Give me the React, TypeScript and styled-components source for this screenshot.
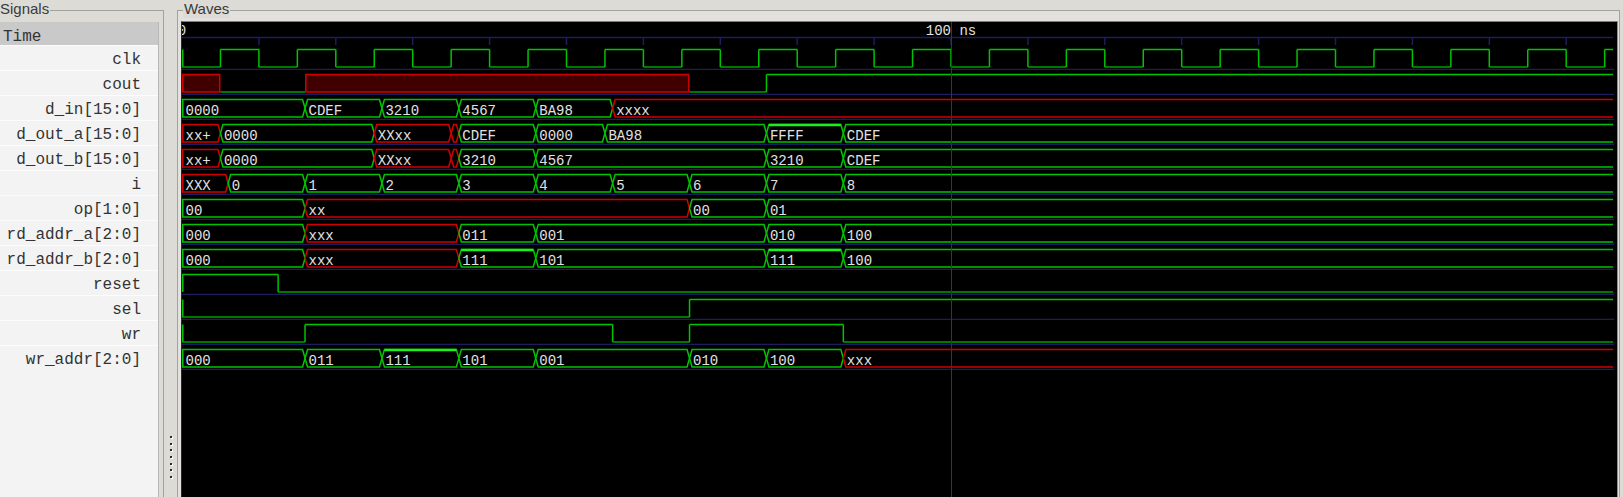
import React from "react";
import styled, { createGlobalStyle } from "styled-components";

// 7.69 px per ns, t=0 sits at the left edge of the wave canvas
const NS = 7.69;
const END = 186.1;
const px = (t: number) => t * NS;

const TOP = 4.5;
const BOT = 22;
const MID = 13.25;
const SLANT = 2.5;

const GREEN = "#00c400";
const GREEN_LOW = "#00a000";
const RED = "#d00000";
const XFILL = "#400000";
const NAVY = "#1c1c5e";
const MARKER = "#2c2c8c";
const TEXT = "#e2e2e2";
const ONES = "#1cf01c";
const CANVAS_W = 1435;

type BitSeg = { from: number; to: number; v: 0 | 1 | "x" };
type VecSeg = { from: number; to: number; label: string; x?: boolean; ones?: boolean };
type Signal =
  | { name: string; kind: "bit"; segs: BitSeg[] }
  | { name: string; kind: "vec"; segs: VecSeg[] };

const clock: BitSeg[] = [{ from: 0, to: 5, v: 0 }];
for (let t = 5; t < END; t += 10) {
  clock.push({ from: t, to: Math.min(t + 5, END), v: 1 });
  if (t + 5 < END) clock.push({ from: t + 5, to: Math.min(t + 10, END), v: 0 });
}

const signals: Signal[] = [
  { name: "clk", kind: "bit", segs: clock },
  {
    name: "cout",
    kind: "bit",
    segs: [
      { from: 0, to: 5, v: "x" },
      { from: 5, to: 16, v: 0 },
      { from: 16, to: 66, v: "x" },
      { from: 66, to: 76, v: 0 },
      { from: 76, to: END, v: 1 },
    ],
  },
  {
    name: "d_in[15:0]",
    kind: "vec",
    segs: [
      { from: 0, to: 16, label: "0000" },
      { from: 16, to: 26, label: "CDEF" },
      { from: 26, to: 36, label: "3210" },
      { from: 36, to: 46, label: "4567" },
      { from: 46, to: 56, label: "BA98" },
      { from: 56, to: END, label: "xxxx", x: true },
    ],
  },
  {
    name: "d_out_a[15:0]",
    kind: "vec",
    segs: [
      { from: 0, to: 5, label: "xx+", x: true },
      { from: 5, to: 25, label: "0000" },
      { from: 25, to: 35, label: "XXxx", x: true },
      { from: 35, to: 36, label: "", x: true },
      { from: 36, to: 46, label: "CDEF" },
      { from: 46, to: 55, label: "0000" },
      { from: 55, to: 76, label: "BA98" },
      { from: 76, to: 86, label: "FFFF", ones: true },
      { from: 86, to: END, label: "CDEF" },
    ],
  },
  {
    name: "d_out_b[15:0]",
    kind: "vec",
    segs: [
      { from: 0, to: 5, label: "xx+", x: true },
      { from: 5, to: 25, label: "0000" },
      { from: 25, to: 35, label: "XXxx", x: true },
      { from: 35, to: 36, label: "", x: true },
      { from: 36, to: 46, label: "3210" },
      { from: 46, to: 76, label: "4567" },
      { from: 76, to: 86, label: "3210" },
      { from: 86, to: END, label: "CDEF" },
    ],
  },
  {
    name: "i",
    kind: "vec",
    segs: [
      { from: 0, to: 6, label: "XXX", x: true },
      { from: 6, to: 16, label: "0" },
      { from: 16, to: 26, label: "1" },
      { from: 26, to: 36, label: "2" },
      { from: 36, to: 46, label: "3" },
      { from: 46, to: 56, label: "4" },
      { from: 56, to: 66, label: "5" },
      { from: 66, to: 76, label: "6" },
      { from: 76, to: 86, label: "7" },
      { from: 86, to: END, label: "8" },
    ],
  },
  {
    name: "op[1:0]",
    kind: "vec",
    segs: [
      { from: 0, to: 16, label: "00" },
      { from: 16, to: 66, label: "xx", x: true },
      { from: 66, to: 76, label: "00" },
      { from: 76, to: END, label: "01" },
    ],
  },
  {
    name: "rd_addr_a[2:0]",
    kind: "vec",
    segs: [
      { from: 0, to: 16, label: "000" },
      { from: 16, to: 36, label: "xxx", x: true },
      { from: 36, to: 46, label: "011" },
      { from: 46, to: 76, label: "001" },
      { from: 76, to: 86, label: "010" },
      { from: 86, to: END, label: "100" },
    ],
  },
  {
    name: "rd_addr_b[2:0]",
    kind: "vec",
    segs: [
      { from: 0, to: 16, label: "000" },
      { from: 16, to: 36, label: "xxx", x: true },
      { from: 36, to: 46, label: "111", ones: true },
      { from: 46, to: 76, label: "101" },
      { from: 76, to: 86, label: "111", ones: true },
      { from: 86, to: END, label: "100" },
    ],
  },
  {
    name: "reset",
    kind: "bit",
    segs: [
      { from: 0, to: 12.5, v: 1 },
      { from: 12.5, to: END, v: 0 },
    ],
  },
  {
    name: "sel",
    kind: "bit",
    segs: [
      { from: 0, to: 66, v: 0 },
      { from: 66, to: END, v: 1 },
    ],
  },
  {
    name: "wr",
    kind: "bit",
    segs: [
      { from: 0, to: 16, v: 0 },
      { from: 16, to: 56, v: 1 },
      { from: 56, to: 66, v: 0 },
      { from: 66, to: 86, v: 1 },
      { from: 86, to: END, v: 0 },
    ],
  },
  {
    name: "wr_addr[2:0]",
    kind: "vec",
    segs: [
      { from: 0, to: 16, label: "000" },
      { from: 16, to: 26, label: "011" },
      { from: 26, to: 36, label: "111", ones: true },
      { from: 36, to: 46, label: "101" },
      { from: 46, to: 66, label: "001" },
      { from: 66, to: 76, label: "010" },
      { from: 76, to: 86, label: "100" },
      { from: 86, to: END, label: "xxx", x: true },
    ],
  },
];

const GlobalStyle = createGlobalStyle`
  html, body {
    margin: 0;
    padding: 0;
    background: #dcdbd6;
    overflow: hidden;
  }
`;

const Window = styled.div`
  width: 1623px;
  height: 497px;
  display: flex;
  background: #dcdbd6;
  overflow: hidden;
  font-family: "Liberation Sans", Arial, sans-serif;
`;

const Legend = styled.span<{ $left: number }>`
  position: absolute;
  top: -11px;
  left: ${(p) => p.$left}px;
  padding: 0 1px;
  background: #dcdbd6;
  color: #3a3a3a;
  font-size: 15px;
  line-height: 18px;
`;

const SignalsFrame = styled.div`
  position: relative;
  box-sizing: border-box;
  width: 164px;
  margin-top: 10px;
  padding: 11px 4px 0 0;
  border-top: 1px solid #a3a29c;
  border-right: 1px solid #a3a29c;
  display: flex;
  flex-direction: column;
`;

const SignalList = styled.div`
  flex: 1;
  display: flex;
  flex-direction: column;
  background: #f3f3f3;
  border-right: 1px solid #b8b8b4;
  font-family: "Liberation Mono", "Courier New", monospace;
  font-size: 16px;
  color: #333;
`;

const TimeHeader = styled.div`
  box-sizing: border-box;
  height: 23px;
  padding: 7px 0 0 3px;
  line-height: 16px;
  background: #c9c9c9;
`;

const SignalRow = styled.div`
  box-sizing: border-box;
  height: 25px;
  padding: 5px 17px 0 0;
  line-height: 19px;
  text-align: right;
  white-space: nowrap;
  border-top: 1px solid #fcfcfc;
`;

const PaneHandle = styled.div`
  width: 13px;
  display: flex;
  flex-direction: column;
  justify-content: flex-end;
  align-items: center;
  gap: 4.7px;
  padding-bottom: 19px;
`;

const GripDot = styled.span`
  width: 2px;
  height: 2px;
  background: #2a2a2a;
  box-shadow: 1px 1px 0 #ffffff;
`;

const WavesFrame = styled.div`
  position: relative;
  box-sizing: border-box;
  width: 1443px;
  margin-top: 10px;
  padding: 10px 1px 0 3px;
  border-top: 1px solid #a3a29c;
  border-left: 1px solid #a3a29c;
  border-right: 1px solid #a3a29c;
  background: #e2e1dd;
  display: flex;
`;

const WaveCanvas = styled.div`
  position: relative;
  width: ${CANVAS_W}px;
  background: #000;
  border-top: 1px solid #7e7e7a;
  border-left: 1px solid #20206a;
  border-right: 1px solid #8e8e8a;
  display: flex;
  flex-direction: column;
  overflow: hidden;
`;

const WaveSvg = styled.svg`
  display: block;
  flex: none;
  font-family: "Liberation Mono", "Courier New", monospace;
  font-size: 14px;
`;

const Marker = styled.div<{ $x: number }>`
  position: absolute;
  top: 0;
  bottom: 0;
  left: ${(p) => p.$x}px;
  width: 1px;
  background: ${MARKER};
`;

function TimeAxis() {
  const ticks = [];
  for (let k = 1; k * 10 < END; k++) {
    ticks.push(
      <line key={k} x1={px(k * 10)} x2={px(k * 10)} y1={15} y2={23} stroke={NAVY} strokeWidth={1.5} />
    );
  }
  return (
    <WaveSvg width={CANVAS_W} height={23}>
      <line x1={0} x2={px(END)} y1={15.5} y2={15.5} stroke={NAVY} strokeWidth={1.5} />
      {ticks}
      <text x={0} y={13} fill={TEXT} textAnchor="middle">0</text>
      <text x={px(100)} y={13} fill={TEXT} textAnchor="middle">100 ns</text>
    </WaveSvg>
  );
}

function BitWave({ segs }: { segs: BitSeg[] }) {
  return (
    <>
      {segs.map((s, i) => {
        const x1 = px(s.from);
        const x2 = px(s.to);
        if (s.v === "x") {
          return (
            <rect key={i} x={x1 + 0.75} y={TOP} width={x2 - x1 - 1.5} height={BOT - TOP}
              fill={XFILL} stroke={RED} strokeWidth={1.5} />
          );
        }
        const y = s.v ? TOP : BOT;
        const prev = segs[i - 1];
        let edge = null;
        if (!prev) {
          edge = <line x1={0.75} x2={0.75} y1={TOP} y2={BOT} stroke={GREEN} strokeWidth={1.5} />;
        } else if (prev.v !== "x" && prev.v !== s.v) {
          edge = <line x1={x1} x2={x1} y1={TOP} y2={BOT} stroke={GREEN} strokeWidth={1.5} />;
        }
        return (
          <g key={i}>
            {edge}
            <line x1={x1} x2={x2} y1={y} y2={y} stroke={s.v ? GREEN : GREEN_LOW} strokeWidth={1.5} />
          </g>
        );
      })}
    </>
  );
}

function vecPoints(s: VecSeg) {
  const x1 = px(s.from);
  const x2 = px(s.to);
  const open = s.to >= END;
  const left =
    s.from === 0
      ? [[0.75, TOP], [0.75, BOT]]
      : [[x1 + SLANT, TOP], [x1, MID], [x1 + SLANT, BOT]];
  const pts = open
    ? [[x2, TOP], ...left, [x2, BOT]]
    : [[x2, MID], [x2 - SLANT, TOP], ...left, [x2 - SLANT, BOT], [x2, MID]];
  return pts.map((p) => p.join(",")).join(" ");
}

function VecWave({ segs }: { segs: VecSeg[] }) {
  return (
    <>
      {segs.map((s, i) => {
        const x1 = px(s.from);
        const x2 = px(s.to);
        return (
          <g key={i}>
            <polyline points={vecPoints(s)} fill="none" stroke={s.x ? RED : GREEN}
              strokeWidth={1.5} strokeLinejoin="miter" />
            {s.ones && (
              <line x1={x1 + SLANT} x2={x2 - SLANT} y1={TOP + 0.5} y2={TOP + 0.5} stroke={ONES} strokeWidth={2.5} />
            )}
            {s.label && (
              <text x={(s.from === 0 ? 0 : x1) + 3.5} y={20} fill={TEXT}>
                {s.label}
              </text>
            )}
          </g>
        );
      })}
    </>
  );
}

function WaveRow({ signal }: { signal: Signal }) {
  return (
    <WaveSvg width={CANVAS_W} height={25}>
      {signal.kind === "bit" ? <BitWave segs={signal.segs} /> : <VecWave segs={signal.segs} />}
      <line x1={0} x2={px(END) + 1} y1={24.5} y2={24.5} stroke={NAVY} strokeWidth={1.5} />
    </WaveSvg>
  );
}

export default function App() {
  return (
    <Window>
      <GlobalStyle />
      <SignalsFrame>
        <Legend $left={-1}>Signals</Legend>
        <SignalList>
          <TimeHeader>Time</TimeHeader>
          {signals.map((s) => (
            <SignalRow key={s.name}>{s.name}</SignalRow>
          ))}
        </SignalList>
      </SignalsFrame>
      <PaneHandle>
        {Array.from({ length: 7 }).map((_, i) => (
          <GripDot key={i} />
        ))}
      </PaneHandle>
      <WavesFrame>
        <Legend $left={5}>Waves</Legend>
        <WaveCanvas>
          <TimeAxis />
          {signals.map((s) => (
            <WaveRow key={s.name} signal={s} />
          ))}
          <Marker $x={Math.round(px(100))} />
        </WaveCanvas>
      </WavesFrame>
    </Window>
  );
}
